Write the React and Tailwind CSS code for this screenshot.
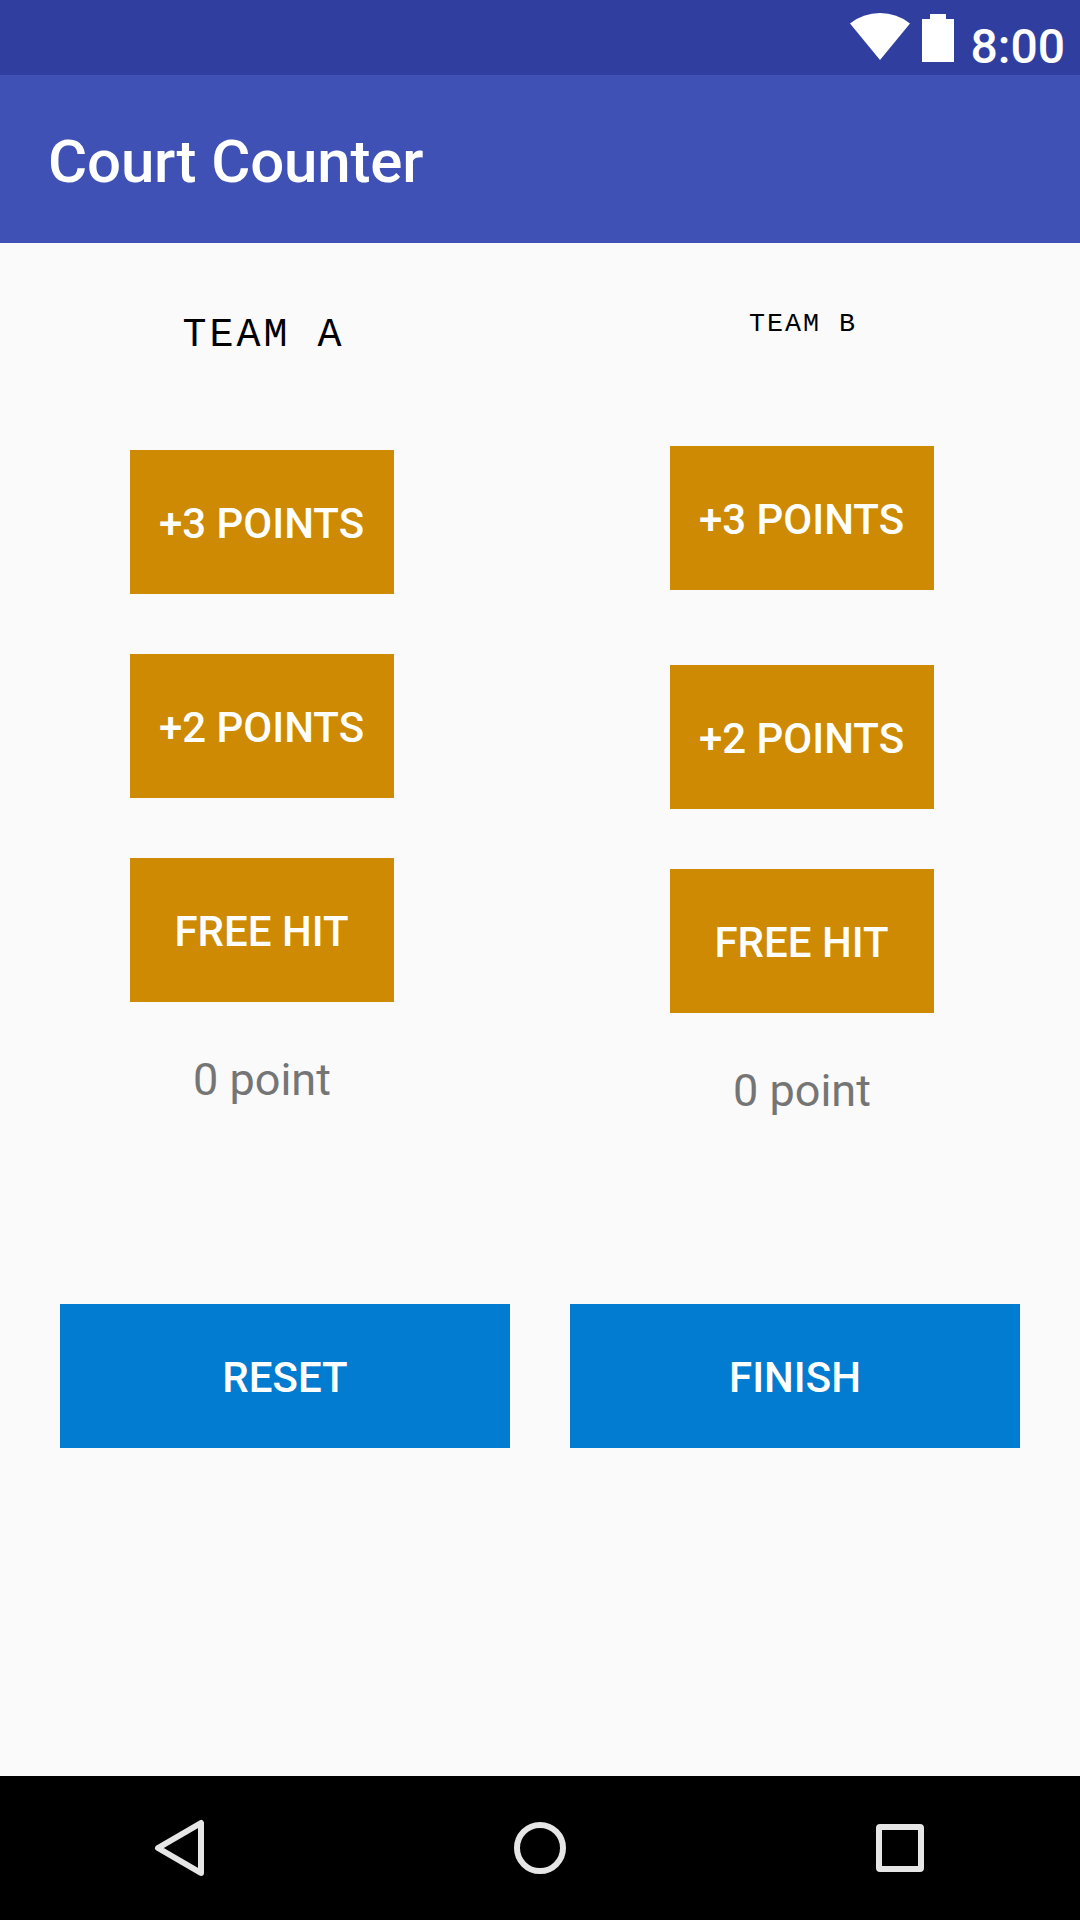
function ScoreButton({ children, className }) {
  return (
    <button className={`h-36 w-66 shrink-0 bg-[#cd8a02] pt-1 pr-px text-[42px] leading-none font-medium text-white ${className}`}>
      {children}
    </button>
  );
}

function ActionButton({ children }) {
  return (
    <button className="h-36 flex-1 bg-[#027cd0] pt-1 text-[42px] leading-none font-medium text-white">
      {children}
    </button>
  );
}

function StatusBar() {
  return (
    <div className="flex h-[75px] items-start justify-end bg-[#303f9f] pr-[15px] text-white">
      <svg className="mt-3 h-12 w-15" viewBox="0 0 60 48" fill="currentColor">
        <path d="M0 11.5Q13 1 30 1T60 11.5L30 48Z" />
      </svg>
      <svg className="mt-3.5 ml-3 h-12 w-8" viewBox="0 0 32 48" fill="currentColor">
        <path d="M8 0h16v5h8v43H0V5h8Z" />
      </svg>
      <span className="mt-[19px] ml-[17px] text-[48px] leading-[56px] font-medium">8:00</span>
    </div>
  );
}

function NavIcon({ children }) {
  return (
    <svg className="h-36 w-36" viewBox="0 0 144 144" fill="none" stroke="currentColor" strokeWidth="6">
      {children}
    </svg>
  );
}

export default function App() {
  return (
    <div className="flex h-[1920px] w-[1080px] flex-col overflow-hidden bg-[#fafafa] font-['Roboto',sans-serif]">
      <StatusBar />
      <header className="flex h-42 items-center bg-[#3f51b5] pl-12">
        <h1 className="pt-1.5 text-[60px] leading-[70px] font-medium tracking-[-0.16px] text-white">Court Counter</h1>
      </header>
      <main className="flex-1">
        <div className="flex h-[1061px]">
          <section className="flex w-[524px] flex-col items-center">
            <h2 className="mt-[67px] h-[50px] pl-[3px] font-['Liberation_Mono',monospace] text-[40px] leading-[51px] tracking-[3px] text-black">TEAM A</h2>
            <ScoreButton className="mt-[90px]">+3 POINTS</ScoreButton>
            <ScoreButton className="mt-15">+2 POINTS</ScoreButton>
            <ScoreButton className="mt-15">FREE HIT</ScoreButton>
            <p className="mt-[51px] text-[45px] leading-[53px] text-[#757575]">0 point</p>
          </section>
          <section className="flex w-[556px] flex-col items-center">
            <h2 className="mt-16 h-[35px] pl-0.5 font-['Liberation_Mono',monospace] text-[26.7px] leading-[34px] tracking-[2px] text-black">TEAM B</h2>
            <ScoreButton className="mt-[104px]">+3 POINTS</ScoreButton>
            <ScoreButton className="mt-[75px]">+2 POINTS</ScoreButton>
            <ScoreButton className="mt-15">FREE HIT</ScoreButton>
            <p className="mt-[51px] text-[45px] leading-[53px] text-[#757575]">0 point</p>
          </section>
        </div>
        <div className="flex gap-15 px-15">
          <ActionButton>RESET</ActionButton>
          <ActionButton>FINISH</ActionButton>
        </div>
      </main>
      <nav className="flex h-36 items-center justify-around bg-black text-[#e6e6e6]">
        <NavIcon>
          <path d="M50 72L93 47V97Z" strokeLinejoin="round" />
        </NavIcon>
        <NavIcon>
          <circle cx="72" cy="72" r="23" />
        </NavIcon>
        <NavIcon>
          <path
            d="M52 48h40a4 4 0 0 1 4 4v40a4 4 0 0 1-4 4H52a4 4 0 0 1-4-4V52a4 4 0 0 1 4-4ZM54 54v36h36V54Z"
            fill="currentColor"
            fillRule="evenodd"
            stroke="none"
          />
        </NavIcon>
      </nav>
    </div>
  );
}
